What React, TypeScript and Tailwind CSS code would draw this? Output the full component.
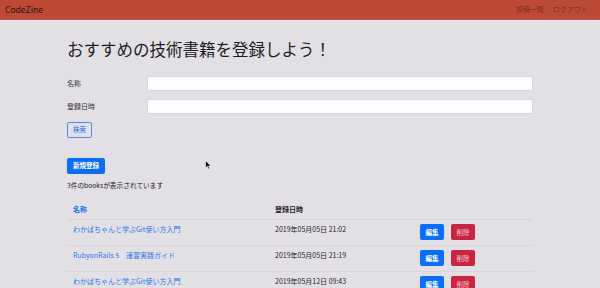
import React from "react";

type Book = {
  name: string;
  date: string;
};

const books: Book[] = [
  { name: "わかばちゃんと学ぶGit使い方入門", date: "2019年05月05日 21:02" },
  { name: "RubyonRails 5　速習実践ガイド", date: "2019年05月05日 21:19" },
  { name: "わかばちゃんと学ぶGit使い方入門", date: "2019年05月12日 09:43" },
];

const font = { fontFamily: '"Noto Sans CJK JP", "Noto Sans", sans-serif' };

const App: React.FC = () => {
  return (
    <div className="relative w-[600px] h-[288px] overflow-hidden bg-[#e2e0e5] text-[#222]" style={font}>
      {/* navbar */}
      <header className="h-[20px] bg-[#bc4a36] border-b border-[#c65a47] flex items-center justify-between px-[5px]">
        <span className="text-[8.5px] leading-none text-[#2a1410]">CodeZine</span>
        <nav className="flex gap-[9px] text-[7px] leading-none text-[#7c2b1f] pr-[7px]">
          <span>投稿一覧</span>
          <span>ログアウト</span>
        </nav>
      </header>

      <main className="w-[466px] mx-auto">
        <h1 className="mt-[17px] text-[16.5px] leading-[24px] font-normal text-[#1d1d1f]">
          おすすめの技術書籍を登録しよう！
        </h1>

        <div className="mt-[15px] flex flex-col gap-[8px]">
          <div className="flex items-center">
            <label className="w-[80px] text-[7px] text-[#333]">名称</label>
            <input className="flex-1 h-[15px] bg-[#fdfcfe] rounded-[2px] border border-[#d9d7dc] outline-none" />
          </div>
          <div className="flex items-center">
            <label className="w-[80px] text-[7px] text-[#333]">登録日時</label>
            <input className="flex-1 h-[15px] bg-[#fdfcfe] rounded-[2px] border border-[#d9d7dc] outline-none" />
          </div>
        </div>

        <button className="mt-[8px] w-[25px] h-[16px] rounded-[2px] border border-[#4a8ff0] text-[6.5px] text-[#1a6ff0] flex items-center justify-center">
          検索
        </button>

        <button className="mt-[20px] w-[38px] h-[16px] rounded-[2px] bg-[#0b6ef6] text-[6.5px] font-bold text-white flex items-center justify-center">
          新規登録
        </button>

        <p className="mt-[6px] text-[6.7px] leading-[10px] text-[#222]">3件のbooksが表示されています</p>

        <div className="mt-[9px]">
          <div className="grid grid-cols-[202px_145px_1fr] border-b border-[#d4d2d7] pt-[5px] pb-[5px] text-[7px] leading-[10px] font-bold">
            <span className="pl-[6px] text-[#1a6ff0]">名称</span>
            <span className="pl-[6px] text-[#222]">登録日時</span>
            <span />
          </div>
          {books.map((b, i) => (
            <div key={i} className="grid grid-cols-[202px_145px_1fr] border-b border-[#d8d6db] pt-[4px] h-[26px] text-[7px] leading-[10px]">
              <span className="pl-[6px] text-[#2a76e6]">{b.name}</span>
              <span className="pl-[6px] text-[#222]">{b.date}</span>
              <div className="pl-[6px] flex gap-[7px]">
                <button className="w-[24px] h-[16px] rounded-[2px] bg-[#0b6ef6] text-[6.5px] font-bold text-white flex items-center justify-center">
                  編集
                </button>
                <button className="w-[24px] h-[16px] rounded-[2px] bg-[#c92540] text-[6.5px] text-[#f3c9cf] flex items-center justify-center">
                  削除
                </button>
              </div>
            </div>
          ))}
        </div>
      </main>

      {/* mouse pointer */}
      <svg className="absolute left-[205px] top-[160px]" width="7" height="10" viewBox="0 0 7 10">
        <path d="M0.5 0.5 L0.5 8 L2.3 6.3 L3.6 9.3 L4.8 8.8 L3.6 5.9 L6 5.9 Z" fill="#111" stroke="#fff" strokeWidth="0.6" />
      </svg>
    </div>
  );
};

export default App;
